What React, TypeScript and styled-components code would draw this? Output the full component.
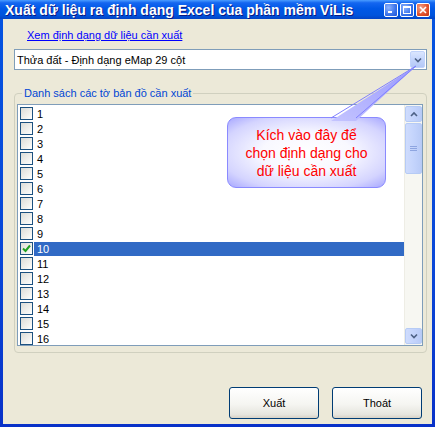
import React from 'react';
import styled, { createGlobalStyle } from 'styled-components';

const GlobalStyle = createGlobalStyle`
  html, body {
    margin: 0;
    padding: 0;
    background: #ece9d8;
  }
  body {
    font-family: "Liberation Sans", Arial, sans-serif;
  }
`;

const Window = styled.div`
  position: relative;
  width: 435px;
  height: 427px;
  display: flex;
  flex-direction: column;
  overflow: hidden;
`;

const TitleBar = styled.div`
  height: 19px;
  display: flex;
  align-items: center;
  padding: 0 5px 0 5px;
  background: linear-gradient(
    180deg,
    #4a9cff 0%,
    #1466f0 15%,
    #0058e6 45%,
    #0054dd 80%,
    #0343c4 100%
  );
`;

const Title = styled.div`
  flex: 1;
  color: #fff;
  font-size: 14px;
  font-weight: bold;
  white-space: nowrap;
  text-shadow: 1px 1px 0 #0a1883;
`;

const TitleButtons = styled.div`
  display: flex;
  gap: 2px;
`;

const TitleButton = styled.div<{ $close?: boolean }>`
  width: 14px;
  height: 14px;
  box-sizing: border-box;
  border: 1px solid #fff;
  border-radius: 2px;
  display: flex;
  align-items: center;
  justify-content: center;
  background: ${(p) =>
    p.$close
      ? 'radial-gradient(circle at 30% 30%, #f2a088 0%, #e0502a 60%, #c23514 100%)'
      : 'radial-gradient(circle at 30% 30%, #8fb4ff 0%, #3a73ea 60%, #1f55d6 100%)'};
`;

const Frame = styled.div`
  flex: 1;
  display: flex;
  padding: 0 3px 3px 3px;
  background: linear-gradient(180deg, #0553e0 0%, #0a47d8 60%, #0831c8 100%);
`;

const Body = styled.div`
  flex: 1;
  display: flex;
  flex-direction: column;
  background: #ece9d8;
`;

const FormatLink = styled.a`
  margin: 10px 0 0 24px;
  font-size: 11px;
  line-height: 13px;
  color: #0000ff;
  text-decoration: underline;
  align-self: flex-start;
  cursor: pointer;
`;

const Combo = styled.div`
  margin: 7px 0 0 11px;
  width: 413px;
  height: 21px;
  box-sizing: border-box;
  border: 1px solid #7f9db9;
  background: #fff;
  display: flex;
  align-items: center;
  font-size: 11px;
  color: #000;
`;

const ComboText = styled.span`
  flex: 1;
  padding-left: 2px;
`;

const ComboButton = styled.div`
  width: 15px;
  height: 17px;
  margin-right: 1px;
  box-sizing: border-box;
  border: 1px solid #c1d3fb;
  border-radius: 2px;
  background: linear-gradient(180deg, #dbe6fe 0%, #c4d5fc 50%, #b4c8f6 100%);
  display: flex;
  align-items: center;
  justify-content: center;
`;

const Group = styled.fieldset`
  margin: 17px 5px 0 11px;
  padding: 4px 3px 6px 2px;
  border: 1px solid #d0d0bf;
  border-radius: 4px;
  min-width: 0;
`;

const Legend = styled.legend`
  margin-left: 5px;
  padding: 0 2px;
  font-size: 11px;
  line-height: 13px;
  color: #0046d5;
`;

const List = styled.div`
  height: 242px;
  box-sizing: border-box;
  border: 1px solid #7f9db9;
  background: #fff;
  display: flex;
`;

const Rows = styled.div`
  flex: 1;
  overflow: hidden;
  padding-top: 1px;
`;

const Row = styled.div`
  height: 15px;
  display: flex;
  align-items: center;
  padding-left: 2px;
`;

const Check = styled.div`
  width: 13px;
  height: 13px;
  box-sizing: border-box;
  border: 1px solid #1c5180;
  background: linear-gradient(135deg, #dcdcd7 0%, #f4f4f1 70%, #ffffff 100%);
  display: flex;
  align-items: center;
  justify-content: center;
`;

const RowLabel = styled.div<{ $selected?: boolean }>`
  flex: 1;
  height: 14px;
  line-height: 14px;
  margin-left: 1px;
  padding-left: 3px;
  font-size: 11px;
  color: ${(p) => (p.$selected ? '#fff' : '#000')};
  background: ${(p) => (p.$selected ? '#316ac5' : 'transparent')};
`;

const ScrollBar = styled.div`
  width: 17px;
  display: flex;
  flex-direction: column;
  background: #f7f7f2;
  border-left: 1px solid #eeede5;
`;

const ScrollButton = styled.div<{ $thumb?: boolean }>`
  height: ${(p) => (p.$thumb ? 51 : 16)}px;
  margin: 1px 0 0 0;
  box-sizing: border-box;
  border: 1px solid #b6cbf5;
  border-radius: 2px;
  background: linear-gradient(90deg, #cfdcfd 0%, #c4d4fc 50%, #b9cbf7 100%);
  display: flex;
  align-items: center;
  justify-content: center;
`;

const ScrollSpacer = styled.div`
  flex: 1;
`;

const Footer = styled.div`
  margin-top: auto;
  display: flex;
  justify-content: flex-end;
  gap: 13px;
  padding: 0 10px 5px 0;
`;

const Button = styled.button`
  width: 90px;
  height: 32px;
  box-sizing: border-box;
  border: 1px solid #003c74;
  border-radius: 3px;
  background: linear-gradient(180deg, #ffffff 0%, #f5f5f1 55%, #e6e5de 88%, #d8d2c6 100%);
  font-family: "Liberation Sans", Arial, sans-serif;
  font-size: 11px;
  color: #000;
  padding: 0;
`;

const Pointer = styled.svg`
  position: absolute;
  left: 0;
  top: 0;
  pointer-events: none;
`;

const Callout = styled.div`
  position: absolute;
  left: 227px;
  top: 117px;
  width: 159px;
  height: 71px;
  box-sizing: border-box;
  border: 1px solid #8a8aff;
  border-radius: 9px;
  background: radial-gradient(
    ellipse at center,
    #ffffff 0%,
    #f8f8ff 40%,
    #d4d4ff 78%,
    #a8a8ff 100%
  );
  display: flex;
  align-items: center;
  justify-content: center;
  text-align: center;
  font-size: 14px;
  line-height: 18px;
  color: #ff0000;
`;

const Chevron = ({ up }: { up?: boolean }) => (
  <svg width="8" height="6" viewBox="0 0 8 6">
    <path
      d={up ? 'M1 5 L4 2 L7 5' : 'M1 1.5 L4 4.5 L7 1.5'}
      fill="none"
      stroke="#4d6185"
      strokeWidth="1.6"
    />
  </svg>
);

const items = Array.from({ length: 16 }, (_, i) => i + 1);

export default function App() {
  return (
    <Window>
      <GlobalStyle />
      <TitleBar>
        <Title>Xuất dữ liệu ra định dạng Excel của phần mềm ViLis</Title>
        <TitleButtons>
          <TitleButton>
            <svg width="8" height="8" viewBox="0 0 8 8">
              <rect x="1" y="5" width="4" height="2" fill="#fff" />
            </svg>
          </TitleButton>
          <TitleButton>
            <svg width="8" height="8" viewBox="0 0 8 8">
              <rect x="0.5" y="0.5" width="7" height="7" fill="none" stroke="#fff" />
              <rect x="0.5" y="0.5" width="7" height="1.5" fill="#fff" />
            </svg>
          </TitleButton>
          <TitleButton $close>
            <svg width="8" height="8" viewBox="0 0 8 8">
              <path d="M1 1 L7 7 M7 1 L1 7" stroke="#fff" strokeWidth="1.6" />
            </svg>
          </TitleButton>
        </TitleButtons>
      </TitleBar>
      <Frame>
        <Body>
          <FormatLink>Xem định dạng dữ liệu cần xuất</FormatLink>
          <Combo>
            <ComboText>Thửa đất - Định dạng eMap 29 cột</ComboText>
            <ComboButton>
              <Chevron />
            </ComboButton>
          </Combo>
          <Group>
            <Legend>Danh sách các tờ bản đồ cần xuất</Legend>
            <List>
              <Rows>
                {items.map((n) => (
                  <Row key={n}>
                    <Check>
                      {n === 10 && (
                        <svg width="9" height="9" viewBox="0 0 9 9">
                          <path
                            d="M1 4.5 L3.5 7 L8 1.5"
                            fill="none"
                            stroke="#21a121"
                            strokeWidth="2"
                          />
                        </svg>
                      )}
                    </Check>
                    <RowLabel $selected={n === 10}>{n}</RowLabel>
                  </Row>
                ))}
              </Rows>
              <ScrollBar>
                <ScrollButton>
                  <Chevron up />
                </ScrollButton>
                <ScrollButton $thumb>
                  <svg width="7" height="6" viewBox="0 0 7 6">
                    <path d="M0 0.5 H7 M0 2.5 H7 M0 4.5 H7" stroke="#8ea5e0" strokeWidth="1" />
                  </svg>
                </ScrollButton>
                <ScrollSpacer />
                <ScrollButton style={{ marginBottom: 1 }}>
                  <Chevron />
                </ScrollButton>
              </ScrollBar>
            </List>
          </Group>
          <Footer>
            <Button>Xuất</Button>
            <Button>Thoát</Button>
          </Footer>
        </Body>
      </Frame>
      <Callout>
        Kích vào đây để
        <br />
        chọn định dạng cho
        <br />
        dữ liệu cần xuất
      </Callout>
      <Pointer width="435" height="427">
        <defs>
          <linearGradient id="ptr" x1="0" y1="1" x2="1" y2="0">
            <stop offset="0" stopColor="#c4c4ff" />
            <stop offset="1" stopColor="#9898ff" />
          </linearGradient>
        </defs>
        <polygon points="331,121 356,121 416,66" fill="url(#ptr)" />
        <polyline points="331,118 416,66 356,118" fill="none" stroke="#8080ff" strokeWidth="1" />
      </Pointer>
    </Window>
  );
}
